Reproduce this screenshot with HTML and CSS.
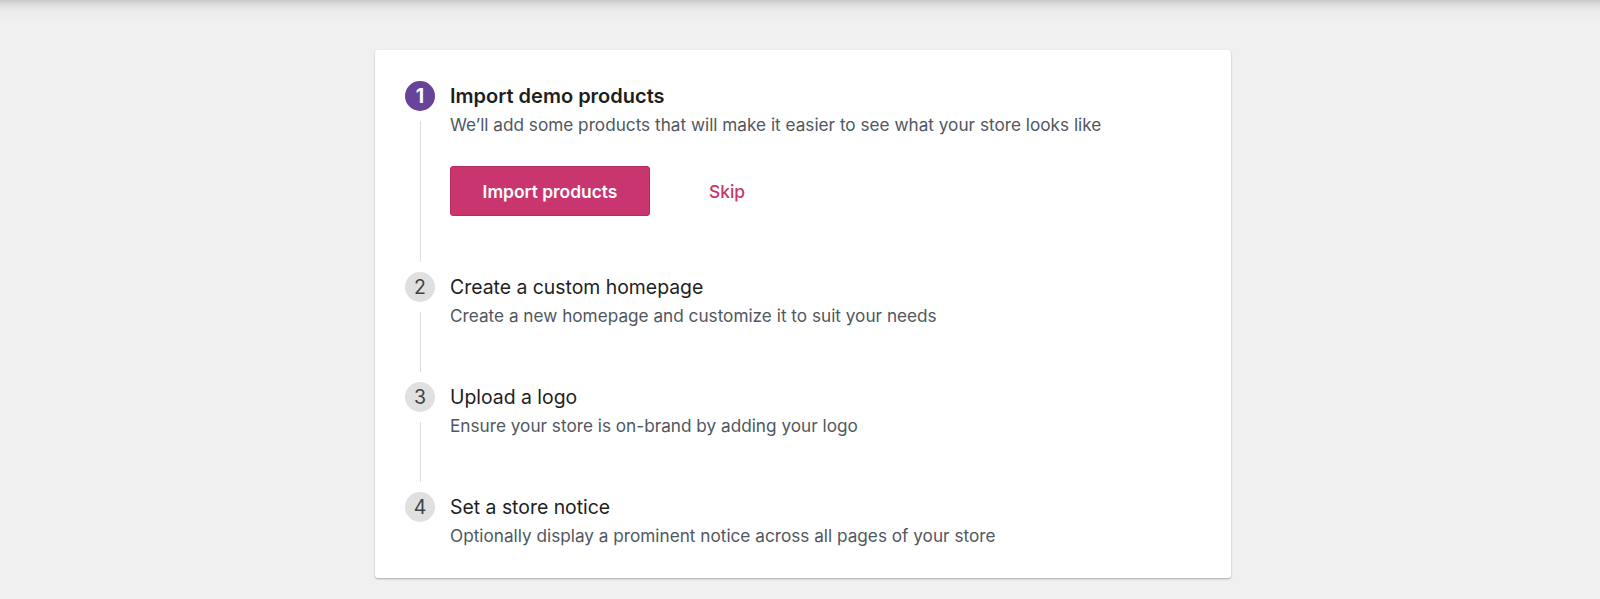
FILE: index.html
```html
<!DOCTYPE html>
<html>
<head>
<meta charset="utf-8">
<link rel="stylesheet" href="styles.css">
</head>
<body>
<div class="page">
  <div class="card">
    <div class="step step-first is-active">
      <div class="rail">
        <div class="num">1</div>
        <div class="line"></div>
      </div>
      <div class="body">
        <div class="title">Import demo products</div>
        <div class="desc">We’ll add some products that will make it easier to see what your store looks like</div>
        <div class="actions">
          <button class="btn-primary">Import products</button>
          <button class="btn-link">Skip</button>
        </div>
      </div>
    </div>
    <div class="step">
      <div class="rail">
        <div class="num">2</div>
        <div class="line"></div>
      </div>
      <div class="body">
        <div class="title">Create a custom homepage</div>
        <div class="desc">Create a new homepage and customize it to suit your needs</div>
      </div>
    </div>
    <div class="step">
      <div class="rail">
        <div class="num">3</div>
        <div class="line"></div>
      </div>
      <div class="body">
        <div class="title">Upload a logo</div>
        <div class="desc">Ensure your store is on-brand by adding your logo</div>
      </div>
    </div>
    <div class="step step-last">
      <div class="rail">
        <div class="num">4</div>
      </div>
      <div class="body">
        <div class="title">Set a store notice</div>
        <div class="desc">Optionally display a prominent notice across all pages of your store</div>
      </div>
    </div>
  </div>
</div>
</body>
</html>
```

FILE: styles.css
```css
html, body {
  margin: 0;
  padding: 0;
}
body {
  background: #f0f0f0;
  font-family: Inter, "Noto Sans", sans-serif;
  color: #1e1e1e;
  -webkit-font-smoothing: antialiased;
}
.page {
  min-height: 599px;
  background: linear-gradient(#c9c9c9 0px, #dedede 5px, #ececec 12px, #f0f0f0 20px) no-repeat;
  background-size: 100% 24px;
  padding-top: 50px;
  box-sizing: border-box;
}
.card {
  width: 856px;
  margin-left: 375px;
  background: #fff;
  border-radius: 3px;
  box-shadow: 0 1px 2px rgba(0, 0, 0, 0.3);
  padding: 31px 30px 30px 30px;
  box-sizing: border-box;
}
.step {
  display: flex;
  padding-bottom: 54px;
}
.step-first {
  padding-bottom: 56px;
}
.step-last {
  padding-bottom: 0;
}
.rail {
  width: 30px;
  display: flex;
  flex-direction: column;
  align-items: center;
  flex: none;
  margin-bottom: -44px;
}
.step-first .rail { margin-bottom: -46px; }
.step-last .rail { margin-bottom: 0; }
.num {
  width: 30px;
  height: 30px;
  border-radius: 50%;
  background: #e0e0e0;
  color: #3c434a;
  font-size: 19.5px;
  line-height: 30px;
  text-align: center;
  flex: none;
}
.is-active .num {
  background: #674399;
  color: #fff;
  font-weight: 700;
}
.line {
  flex: 1;
  width: 1px;
  background: #dcdcdc;
  margin-top: 10px;
}
.body {
  margin-left: 15px;
}
.title {
  font-size: 19.4px;
  line-height: 30px;
  color: #1e1e1e;
}
.is-active .title {
  font-size: 20px;
  font-weight: 600;
}
.desc {
  margin-top: 2px;
  font-size: 17.2px;
  line-height: 24px;
  color: #50575e;
}
.actions {
  display: flex;
  align-items: center;
  margin-top: 29px;
}
.btn-primary {
  width: 200px;
  height: 50px;
  background: #c9356e;
  border: 1px solid #b52c60;
  border-radius: 3px;
  color: #fff;
  font-family: inherit;
  font-size: 17.4px;
  font-weight: 600;
  padding: 0;
}
.btn-link {
  margin-left: 59px;
  background: none;
  border: none;
  padding: 0;
  color: #c9356e;
  font-family: inherit;
  font-size: 17.4px;
  font-weight: 500;
}
```
